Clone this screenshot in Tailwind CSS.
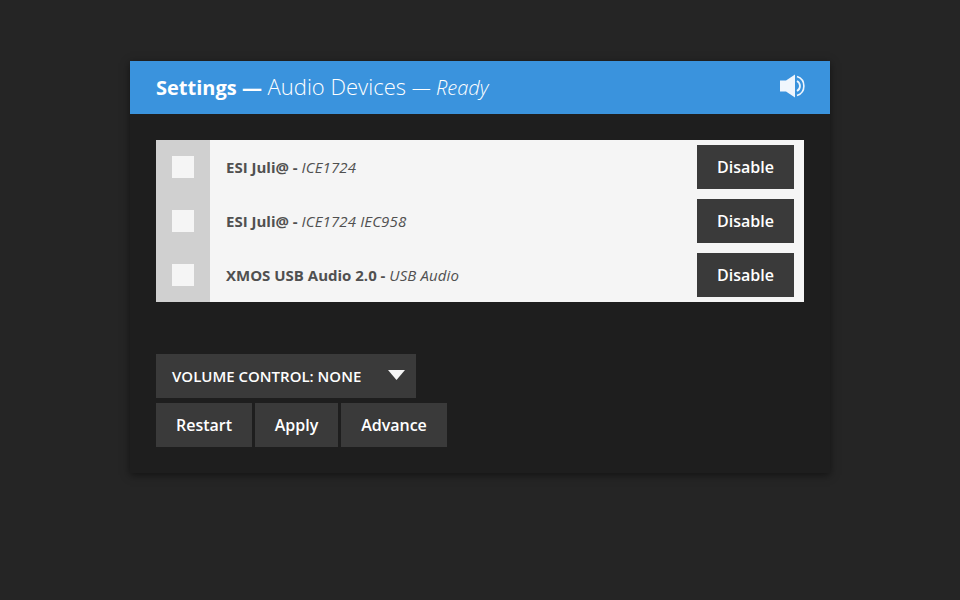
<!DOCTYPE html>
<html lang="en">
  <head>
    <meta charset="UTF-8" />
    <title>Settings</title>
    <script src="https://cdn.jsdelivr.net/npm/@tailwindcss/browser@4"></script>
  </head>
  <body class="bg-[#252525] h-[600px] overflow-hidden font-['Open_Sans',sans-serif]">
    <div class="w-[700px] h-[412px] ml-[130px] relative top-[61px] bg-[#1e1e1e] shadow-[0_2px_8px_rgba(0,0,0,0.5)]">
      <!-- Header -->
      <header class="h-[53px] bg-[#3a93dd] text-white flex items-center justify-between pl-[26px] pr-[25px]">
        <h1 class="text-[22px] font-light leading-[50px] -mt-[2px]"><span class="text-[20px] font-bold">Settings —</span> Audio Devices <span class="text-[20px] italic">— Ready</span></h1>
        <svg class="w-[25px] h-[24px] -mt-[4px]" viewBox="0 0 25 24">
          <path fill="#f0f6fd" d="M0 6.500h6L15 0.500v23L6 17.500H0z" />
          <path fill="none" stroke="#f0f6fd" stroke-width="1.800" d="M17 7a5.700 5.700 0 0 1 0 10" />
          <path fill="none" stroke="#f0f6fd" stroke-width="1.600" d="M17 2.500a10 10 0 0 1 0 19" />
        </svg>
      </header>

      <!-- Device list -->
      <div class="mt-[26px] mx-[26px] bg-[#f5f5f5]">
        <div class="flex items-center h-[54px]">
          <div class="w-[54px] h-full bg-[#d0d0d0] flex items-center justify-center"><div class="w-[22px] h-[22px] bg-[#f5f5f5]"></div></div>
          <p class="flex-1 pl-[16px] text-[15px] text-[#505050]"><b class="font-bold">ESI Juli@ -</b> <i class="tracking-[0.12px]">ICE1724</i></p>
          <button class="w-[97px] h-[44px] mr-[10px] bg-[#3a3a3a] text-white text-[16px] font-semibold">Disable</button>
        </div>
        <div class="flex items-center h-[54px]">
          <div class="w-[54px] h-full bg-[#d0d0d0] flex items-center justify-center"><div class="w-[22px] h-[22px] bg-[#f5f5f5]"></div></div>
          <p class="flex-1 pl-[16px] text-[15px] text-[#505050]"><b class="font-bold">ESI Juli@ -</b> <i class="tracking-[0.12px]">ICE1724 IEC958</i></p>
          <button class="w-[97px] h-[44px] mr-[10px] bg-[#3a3a3a] text-white text-[16px] font-semibold">Disable</button>
        </div>
        <div class="flex items-center h-[54px]">
          <div class="w-[54px] h-full bg-[#d0d0d0] flex items-center justify-center"><div class="w-[22px] h-[22px] bg-[#f5f5f5]"></div></div>
          <p class="flex-1 pl-[16px] text-[15px] text-[#505050]"><b class="font-bold">XMOS USB Audio 2.0 -</b> <i class="tracking-[0.12px]">USB Audio</i></p>
          <button class="w-[97px] h-[44px] mr-[10px] bg-[#3a3a3a] text-white text-[16px] font-semibold">Disable</button>
        </div>
      </div>

      <!-- Controls -->
      <div class="mt-[52px] mx-[26px]">
        <div class="w-[260px] h-[44px] bg-[#3a3a3a] text-white flex items-center justify-between pl-[16px] pr-[11px]">
          <span class="text-[15px] font-semibold uppercase">Volume Control: None</span>
          <svg class="w-[17px] h-[10px] -mt-[3px]" viewBox="0 0 17 10"><path fill="#f5f5f5" d="M0 0h17L8.500 10z" /></svg>
        </div>
        <div class="flex gap-[3px] mt-[5px]">
          <button class="w-[96px] h-[44px] bg-[#3a3a3a] text-white text-[16px] font-semibold">Restart</button>
          <button class="w-[83px] h-[44px] bg-[#3a3a3a] text-white text-[16px] font-semibold">Apply</button>
          <button class="w-[106px] h-[44px] bg-[#3a3a3a] text-white text-[16px] font-semibold">Advance</button>
        </div>
      </div>
    </div>
  </body>
</html>
